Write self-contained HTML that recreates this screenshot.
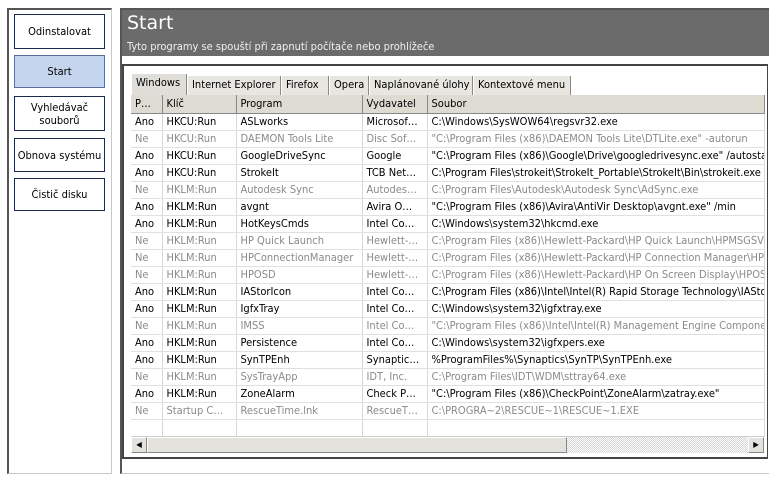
<!DOCTYPE html>
<html><head><meta charset="utf-8"><style>
*{margin:0;padding:0;box-sizing:border-box}
body{width:769px;height:479px;background:#fff;font-family:Tahoma,"DejaVu Sans Condensed","Liberation Sans",sans-serif;font-size:11px;color:#000;position:relative;overflow:hidden}
.abs{position:absolute}
#side{left:7px;top:8px;width:105px;height:466px;border-left:2px solid #555;border-top:2px solid #555;border-right:1px solid #c8c8c8;border-bottom:1px solid #c8c8c8}
.btn{position:absolute;left:14px;width:91px;border:1px solid #1d2b4a;background:#fff;display:flex;align-items:center;justify-content:center;text-align:center;font-size:11px;line-height:13px}
#main{left:120px;top:8px;width:649px;height:466px;border-left:2px solid #555;border-top:2px solid #555;border-bottom:1px solid #c8c8c8}
#hdr{left:122px;top:10px;width:647px;height:46px;background:#6b6b6b;color:#fff}
#hdr h1{position:absolute;left:5px;top:2px;font-size:19px;font-weight:normal;font-family:"DejaVu Sans","Liberation Sans",sans-serif}
#hdr p{position:absolute;left:5px;top:30px;font-size:11px;color:#f0f0f0}
#panel{left:122px;top:64px;width:646px;height:395px;border:2px solid #444;border-right:1px solid #444;border-bottom:2px solid #444;background:#fff}
.tab{position:absolute;top:76px;height:19px;background:#e8e6e0;border-right:1px solid #888;border-left:1px solid #fff;padding:2px 4px 0 4px;white-space:nowrap;font-size:11px}
table{position:absolute;left:131px;top:95px;border-collapse:collapse;table-layout:fixed;width:634px}
td,th{height:17px;padding:0 4px;white-space:nowrap;overflow:hidden;font-weight:normal;text-align:left;border-right:1px solid #d8d8d8;border-bottom:1px solid #e0e0e0;font-size:11px}
th{background:#dedbd3;border-right:1px solid #888;border-bottom:1px solid #888;height:18px}
tr.g td{color:#8a8a8a}
#sb{left:131px;top:436px;width:633px;height:17px;background:repeating-conic-gradient(#d4d4d4 0 25%,#fff 0 50%) 0 0/2px 2px;border-top:1px solid #ccc}
.sbb{position:absolute;top:0;width:16px;height:16px;background:#e4e2dc;border:1px solid #888;border-top-color:#fff;border-left-color:#fff}
</style></head><body>
<div id="side" class="abs"></div>
<div class="btn" style="top:14px;height:35px">Odinstalovat</div>
<div class="btn" style="top:55px;height:33px;background:#c5d5ee;border-color:#5a6f9a">Start</div>
<div class="btn" style="top:96px;height:35px">Vyhledávač<br>souborů</div>
<div class="btn" style="top:138px;height:34px">Obnova systému</div>
<div class="btn" style="top:178px;height:33px">Čistič disku</div>
<div id="main" class="abs"></div>
<div id="hdr" class="abs"><h1>Start</h1><p>Tyto programy se spouští při zapnutí počítače nebo prohlížeče</p></div>
<div id="panel" class="abs"></div>
<div class="tab" style="left:131px;top:74px;height:21px;width:56px;background:#e0ded8">Windows</div>
<div class="tab" style="left:187px;width:94px">Internet Explorer</div>
<div class="tab" style="left:281px;width:48px">Firefox</div>
<div class="tab" style="left:329px;width:40px">Opera</div>
<div class="tab" style="left:369px;width:104px">Naplánované úlohy</div>
<div class="tab" style="left:473px;width:98px">Kontextové menu</div>
<table>
<colgroup><col style="width:31px"><col style="width:74px"><col style="width:126px"><col style="width:65px"><col></colgroup>
<tr><th>P…</th><th>Klíč</th><th>Program</th><th>Vydavatel</th><th>Soubor</th></tr>
<tr><td>Ano</td><td>HKCU:Run</td><td>ASLworks</td><td>Microsof…</td><td>C:\Windows\SysWOW64\regsvr32.exe</td></tr>
<tr class="g"><td>Ne</td><td>HKCU:Run</td><td>DAEMON Tools Lite</td><td>Disc Sof…</td><td>"C:\Program Files (x86)\DAEMON Tools Lite\DTLite.exe" -autorun</td></tr>
<tr><td>Ano</td><td>HKCU:Run</td><td>GoogleDriveSync</td><td>Google</td><td>"C:\Program Files (x86)\Google\Drive\googledrivesync.exe" /autostart</td></tr>
<tr><td>Ano</td><td>HKCU:Run</td><td>StrokeIt</td><td>TCB Net…</td><td>C:\Program Files\strokeit\StrokeIt_Portable\StrokeIt\Bin\strokeit.exe</td></tr>
<tr class="g"><td>Ne</td><td>HKLM:Run</td><td>Autodesk Sync</td><td>Autodes…</td><td>C:\Program Files\Autodesk\Autodesk Sync\AdSync.exe</td></tr>
<tr><td>Ano</td><td>HKLM:Run</td><td>avgnt</td><td>Avira O…</td><td>"C:\Program Files (x86)\Avira\AntiVir Desktop\avgnt.exe" /min</td></tr>
<tr><td>Ano</td><td>HKLM:Run</td><td>HotKeysCmds</td><td>Intel Co…</td><td>C:\Windows\system32\hkcmd.exe</td></tr>
<tr class="g"><td>Ne</td><td>HKLM:Run</td><td>HP Quick Launch</td><td>Hewlett-…</td><td>C:\Program Files (x86)\Hewlett-Packard\HP Quick Launch\HPMSGSVC.exe</td></tr>
<tr class="g"><td>Ne</td><td>HKLM:Run</td><td>HPConnectionManager</td><td>Hewlett-…</td><td>C:\Program Files (x86)\Hewlett-Packard\HP Connection Manager\HPCM.exe</td></tr>
<tr class="g"><td>Ne</td><td>HKLM:Run</td><td>HPOSD</td><td>Hewlett-…</td><td>C:\Program Files (x86)\Hewlett-Packard\HP On Screen Display\HPOSD.exe</td></tr>
<tr><td>Ano</td><td>HKLM:Run</td><td>IAStorIcon</td><td>Intel Co…</td><td>C:\Program Files (x86)\Intel\Intel(R) Rapid Storage Technology\IAStorIcon.exe</td></tr>
<tr><td>Ano</td><td>HKLM:Run</td><td>IgfxTray</td><td>Intel Co…</td><td>C:\Windows\system32\igfxtray.exe</td></tr>
<tr class="g"><td>Ne</td><td>HKLM:Run</td><td>IMSS</td><td>Intel Co…</td><td>"C:\Program Files (x86)\Intel\Intel(R) Management Engine Components\IMSS"</td></tr>
<tr><td>Ano</td><td>HKLM:Run</td><td>Persistence</td><td>Intel Co…</td><td>C:\Windows\system32\igfxpers.exe</td></tr>
<tr><td>Ano</td><td>HKLM:Run</td><td>SynTPEnh</td><td>Synaptic…</td><td>%ProgramFiles%\Synaptics\SynTP\SynTPEnh.exe</td></tr>
<tr class="g"><td>Ne</td><td>HKLM:Run</td><td>SysTrayApp</td><td>IDT, Inc.</td><td>C:\Program Files\IDT\WDM\sttray64.exe</td></tr>
<tr><td>Ano</td><td>HKLM:Run</td><td>ZoneAlarm</td><td>Check P…</td><td>"C:\Program Files (x86)\CheckPoint\ZoneAlarm\zatray.exe"</td></tr>
<tr class="g"><td>Ne</td><td>Startup C…</td><td>RescueTime.lnk</td><td>RescueT…</td><td>C:\PROGRA~2\RESCUE~1\RESCUE~1.EXE</td></tr>
<tr><td></td><td></td><td></td><td></td><td></td></tr>
</table>
<div id="sb" class="abs">
<div class="sbb" style="left:0;font-size:8px;line-height:14px;text-align:center">◀</div>
<div class="abs" style="left:16px;top:0;width:420px;height:16px;background:#e4e2dc;border:1px solid #888;border-top-color:#fff;border-left-color:#fff"></div>
<div class="sbb" style="right:0;font-size:8px;line-height:14px;text-align:center">▶</div>
</div>
</body></html>
